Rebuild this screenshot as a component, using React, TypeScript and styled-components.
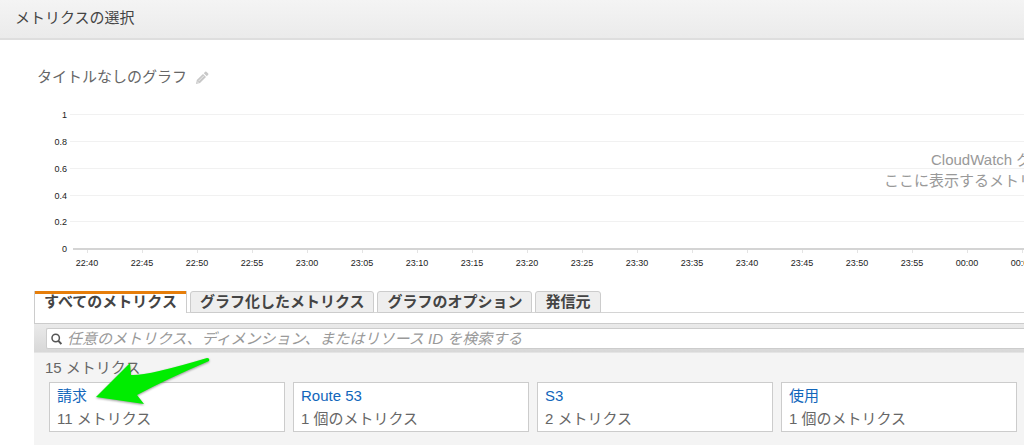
import React from "react";
import styled, { createGlobalStyle, css } from "styled-components";

const Global = createGlobalStyle`
  * { box-sizing: border-box; }
  body {
    margin: 0;
    background: #fff;
    color: #666;
    font: 15px/22px "Liberation Sans", "Noto Sans CJK JP", sans-serif;
  }
`;

const Header = styled.header`
  padding: 7px 15px 9px;
  background: linear-gradient(#f4f4f4, #ebebeb);
  border-bottom: 2px solid #dedede;
`;

const HeaderTitle = styled.h1`
  margin: 0;
  color: #444;
  font-size: 15px;
  font-weight: 400;
  line-height: 22px;
`;

const GraphHeading = styled.div`
  display: flex;
  align-items: center;
  gap: 8px;
  padding: 26px 0 0 37px;
`;

const GraphTitle = styled.h2`
  margin: 0;
  font-size: 15px;
  font-weight: 400;
  line-height: 22px;
`;

const IconButton = styled.button`
  display: flex;
  padding: 2px 0 0;
  border: 0;
  background: none;
`;

const Chart = styled.svg`
  display: block;
  width: 100%;
  height: 192px;
  font-size: 9px;
`;

const AxisLabel = styled.text`
  fill: #222;
`;

const EmptyMessage = styled.text`
  fill: #999;
  font-size: 15px;
`;

const Metrics = styled.section`
  position: relative;
  margin: 11px 0 0 34px;
`;

const Tabs = styled.div`
  display: flex;
  gap: 3px;
  border-left: 1px solid #ccc;
  padding-bottom: 10px;
  background: linear-gradient(#d4d4d4, #d4d4d4) 0 21px / 100% 1px no-repeat;
`;

const Tab = styled.button<{ $active?: boolean }>`
  height: 22px;
  padding: 0 9px;
  border: 1px solid #ccc;
  border-radius: 3px 3px 0 0;
  background: #eee;
  color: #444;
  font: inherit;
  font-weight: 700;
  line-height: 18px;
  white-space: nowrap;
  ${(p) =>
    p.$active &&
    css`
      border: 0;
      border-right: 1px solid #ccc;
      border-radius: 0;
      background: linear-gradient(#e67e0a, #e67e0a) 0 0 / 100% 3px no-repeat #fff;
    `}
`;

const SearchBar = styled.div`
  padding: 4px 0 3px 12px;
  border-top: 1px solid #ccc;
  border-bottom: 1px solid #e4e4e4;
  background: linear-gradient(#eaeaea, #d8d8d8);
`;

const SearchField = styled.label`
  display: flex;
  align-items: center;
  gap: 5px;
  height: 21px;
  padding-left: 4px;
  border: 1px solid #ccc;
  border-right: 0;
  border-radius: 2px 0 0 2px;
  background: #fff;
`;

const SearchInput = styled.input`
  flex: 1;
  min-width: 0;
  height: 19px;
  padding: 0;
  border: 0;
  outline: 0;
  background: none;
  color: #444;
  font: inherit;
  &::placeholder {
    color: #999;
    font-style: italic;
    opacity: 1;
  }
`;

const Results = styled.div`
  padding: 4px 7px 13px 11px;
  background: #f4f4f4;
`;

const Count = styled.p`
  margin: 0 0 3px;
`;

const Cards = styled.div`
  display: grid;
  grid-template-columns: repeat(4, 1fr);
  gap: 8px;
  padding-left: 4px;
`;

const Card = styled.div`
  padding: 1px 7px;
  border: 1px solid #ccc;
  background: #fff;
  line-height: 23px;
`;

const CardLink = styled.a`
  display: block;
  color: #1166bb;
  text-decoration: none;
`;

const Pointer = styled.svg`
  position: absolute;
  top: 63px;
  left: 58px;
  pointer-events: none;
  filter: drop-shadow(0 1px 1px rgba(0, 0, 0, 0.4));
`;

const tabs = ["すべてのメトリクス", "グラフ化したメトリクス", "グラフのオプション", "発信元"];

const cards = [
  { name: "請求", count: "11 メトリクス" },
  { name: "Route 53", count: "1 個のメトリクス" },
  { name: "S3", count: "2 メトリクス" },
  { name: "使用", count: "1 個のメトリクス" },
];

const levels = ["1", "0.8", "0.6", "0.4", "0.2", "0"];

const times = Array.from({ length: 18 }, (_, i) => {
  const minutes = (22 * 60 + 40 + i * 5) % 1440;
  const pad = (n: number) => String(n).padStart(2, "0");
  return `${pad(Math.floor(minutes / 60))}:${pad(minutes % 60)}`;
});

function PencilIcon() {
  return (
    <svg width="14" height="14" viewBox="0 0 14 14" fill="#c8c8c8">
      <path d="M1 13l.8-4L8 3l3 3-6 6z" />
      <path d="M8.800 2.200l1.400-1.400q.6-.5 1.200 0l1.800 1.800q.5.6 0 1.200L11.800 5.200z" />
      <path d="M3.500 10.200L8.800 4.900M2 10.500l1.500 1.500" stroke="#f2f2f2" strokeWidth=".8" />
    </svg>
  );
}

function Graph() {
  return (
    <Chart role="img" aria-label="グラフ">
      {levels.map((level, i) => {
        const y = 26 + i * 27 - (i > 3 ? 1 : 0);
        const base = level === "0";
        return (
          <g key={level}>
            <rect x={base ? 73 : 70} y={y} width="100%" height={base ? 2 : 1} fill={base ? "#d4d4d4" : "#f1f1f1"} />
            <AxisLabel x="67" y={y + 4} textAnchor="end">{level}</AxisLabel>
          </g>
        );
      })}
      {times.map((time, i) => (
        <g key={time}>
          <rect x={87 + i * 55} y="162" width="1" height="3" fill="#e4e4e4" />
          <AxisLabel x={87 + i * 55} y="178" textAnchor="middle">{time}</AxisLabel>
        </g>
      ))}
      <EmptyMessage x="931" y="77">CloudWatch グ</EmptyMessage>
      <EmptyMessage x="884" y="98">ここに表示するメトリ</EmptyMessage>
    </Chart>
  );
}

export default function App() {
  return (
    <>
      <Global />
      <Header>
        <HeaderTitle>メトリクスの選択</HeaderTitle>
      </Header>
      <main>
        <GraphHeading>
          <GraphTitle>タイトルなしのグラフ</GraphTitle>
          <IconButton aria-label="タイトルを編集">
            <PencilIcon />
          </IconButton>
        </GraphHeading>
        <Graph />
        <Metrics>
          <Tabs role="tablist">
            {tabs.map((tab, i) => (
              <Tab key={tab} role="tab" aria-selected={i === 0} $active={i === 0}>{tab}</Tab>
            ))}
          </Tabs>
          <SearchBar>
            <SearchField>
              <svg width="11" height="12" viewBox="0 0 11 12" fill="none" stroke="#555">
                <circle cx="4.700" cy="5" r="3.700" strokeWidth="1.500" />
                <path d="M7.400 7.900l3 3.200" strokeWidth="2" />
              </svg>
              <SearchInput
                aria-label="メトリクスを検索"
                placeholder="任意のメトリクス、ディメンション、またはリソース ID を検索する"
              />
            </SearchField>
          </SearchBar>
          <Results>
            <Count>15 メトリクス</Count>
            <Cards>
              {cards.map((card) => (
                <Card key={card.name}>
                  <CardLink href="#">{card.name}</CardLink>
                  {card.count}
                </Card>
              ))}
            </Cards>
          </Results>
          <Pointer width="122" height="56" viewBox="0 0 122 56" fill="#00ed00" aria-hidden="true">
            <path d="M4 43L38 9L39 21Q55 22 115 4Q118 4 117 7Q75 25 45 41L52 50Z" />
          </Pointer>
        </Metrics>
      </main>
    </>
  );
}
